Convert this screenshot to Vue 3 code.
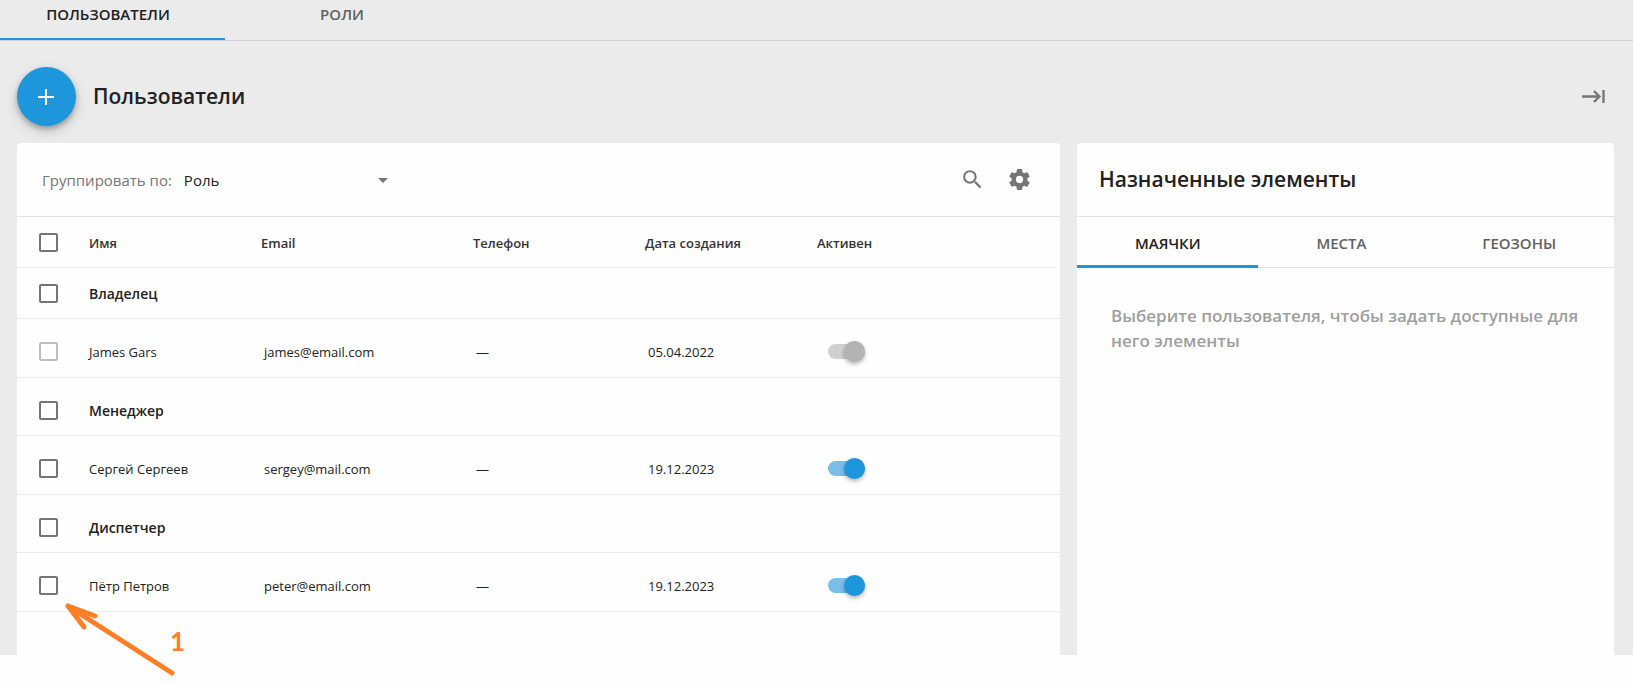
<script setup>
import { ref } from 'vue'

const section = ref('users')
const sections = [
  { id: 'users', label: 'ПОЛЬЗОВАТЕЛИ' },
  { id: 'roles', label: 'РОЛИ' },
]

const panel = ref('beacons')
const panels = [
  { id: 'beacons', label: 'МАЯЧКИ' },
  { id: 'places', label: 'МЕСТА' },
  { id: 'zones', label: 'ГЕОЗОНЫ' },
]

const groupBy = ref('role')

const groups = ref([
  {
    title: 'Владелец',
    users: [{ name: 'James Gars', email: 'james@email.com', date: '05.04.2022', active: true, locked: true }],
  },
  {
    title: 'Менеджер',
    users: [{ name: 'Сергей Сергеев', email: 'sergey@mail.com', date: '19.12.2023', active: true, locked: false }],
  },
  {
    title: 'Диспетчер',
    users: [{ name: 'Пётр Петров', email: 'peter@email.com', date: '19.12.2023', active: true, locked: false }],
  },
])
</script>

<template>
  <div class="page">
    <div class="screen">
      <nav class="sections" role="tablist">
        <button
          v-for="s in sections"
          :key="s.id"
          type="button"
          role="tab"
          class="section-tab"
          :class="{ current: section === s.id }"
          :aria-selected="section === s.id"
          @click="section = s.id"
        >{{ s.label }}</button>
      </nav>

      <header class="heading">
        <button type="button" class="fab" aria-label="Добавить пользователя">
          <svg width="25" height="25" viewBox="0 0 25 25" aria-hidden="true">
            <path d="M12 5v16M4 13h16" stroke="#fff" stroke-width="2" fill="none" />
          </svg>
        </button>
        <h1 class="title">Пользователи</h1>
        <button type="button" class="icon-button collapse" aria-label="Свернуть панель">
          <svg width="24" height="24" viewBox="0 0 24 24" aria-hidden="true">
            <path d="M0 12.5H17M12 7L17.5 12.5L12 18M21.5 6V19" stroke="#757575" stroke-width="2.3" fill="none" />
          </svg>
        </button>
      </header>

      <main class="cards">
        <section class="card">
          <div class="toolbar">
            <label class="group-label" for="group-by">Группировать по:</label>
            <span class="select-box">
              <select id="group-by" v-model="groupBy" class="group-select">
                <option value="role">Роль</option>
              </select>
              <svg class="caret" width="10" height="7" viewBox="0 0 10 7" aria-hidden="true">
                <path d="M0 2h10L5 7z" fill="#757575" />
              </svg>
            </span>
            <div class="tools">
              <button type="button" class="icon-button" aria-label="Поиск">
                <svg width="25" height="25" viewBox="0 0 24 24" aria-hidden="true">
                  <path fill="#757575" d="M15.5 14h-.79l-.28-.27A6.471 6.471 0 0 0 16 9.5 6.5 6.5 0 1 0 9.5 16c1.61 0 3.09-.59 4.23-1.57l.27.28v.79l5 4.99L20.49 19l-4.99-5zm-6 0C7.01 14 5 11.99 5 9.5S7.01 5 9.5 5 14 7.01 14 9.5 11.99 14 9.5 14z" />
                </svg>
              </button>
              <button type="button" class="icon-button" aria-label="Настройки">
                <svg width="25" height="25" viewBox="0 0 24 24" aria-hidden="true">
                  <path fill="#757575" d="M12 15.5A3.5 3.5 0 0 1 8.5 12 3.5 3.5 0 0 1 12 8.5a3.5 3.5 0 0 1 3.5 3.5 3.5 3.5 0 0 1-3.5 3.5m7.43-2.53c.04-.32.07-.64.07-.97s-.03-.66-.07-1l2.11-1.63c.19-.15.24-.42.12-.64l-2-3.46c-.12-.22-.39-.31-.61-.22l-2.49 1c-.52-.39-1.06-.73-1.69-.98l-.37-2.65A.506.506 0 0 0 14 2h-4c-.25 0-.46.18-.5.42l-.37 2.65c-.63.25-1.17.59-1.69.98l-2.49-1c-.22-.09-.49 0-.61.22l-2 3.46c-.13.22-.07.49.12.64L4.57 11c-.04.34-.07.67-.07 1s.03.65.07.97l-2.11 1.66c-.19.15-.25.42-.12.64l2 3.46c.12.22.39.3.61.22l2.49-1.01c.52.4 1.06.74 1.69.99l.37 2.65c.04.24.25.42.5.42h4c.25 0 .46-.18.5-.42l.37-2.65c.63-.26 1.17-.59 1.69-.99l2.49 1.01c.22.08.49 0 .61-.22l2-3.46c.12-.22.07-.49-.12-.64z" />
                </svg>
              </button>
            </div>
          </div>

          <table class="users">
            <colgroup>
              <col class="col-check" />
              <col class="col-name" />
              <col class="col-phone" />
              <col class="col-name" />
              <col class="col-name" />
              <col />
              <col class="col-edge" />
            </colgroup>
            <thead>
              <tr>
                <th class="check-cell"><input type="checkbox" class="check" aria-label="Выбрать всех" /></th>
                <th>Имя</th>
                <th>Email</th>
                <th>Телефон</th>
                <th>Дата создания</th>
                <th>Активен</th>
                <th class="edge"></th>
              </tr>
            </thead>
            <tbody v-for="g in groups" :key="g.title">
              <tr class="group-row">
                <td class="check-cell"><input type="checkbox" class="check" :aria-label="g.title" /></td>
                <td colspan="6" class="group-title">{{ g.title }}</td>
              </tr>
              <tr v-for="u in g.users" :key="u.email" class="user-row">
                <td class="check-cell">
                  <input type="checkbox" class="check" :disabled="u.locked" :aria-label="u.name" />
                </td>
                <td class="text">{{ u.name }}</td>
                <td class="text value">{{ u.email }}</td>
                <td class="text value">—</td>
                <td class="text value">{{ u.date }}</td>
                <td colspan="2" class="switch-cell">
                  <input
                    v-model="u.active"
                    type="checkbox"
                    role="switch"
                    class="switch"
                    :disabled="u.locked"
                    :aria-label="'Активен: ' + u.name"
                  />
                </td>
              </tr>
            </tbody>
          </table>
        </section>

        <section class="card">
          <h2 class="panel-title">Назначенные элементы</h2>
          <div class="panel-tabs" role="tablist">
            <button
              v-for="p in panels"
              :key="p.id"
              type="button"
              role="tab"
              class="panel-tab"
              :class="{ current: panel === p.id }"
              :aria-selected="panel === p.id"
              @click="panel = p.id"
            >{{ p.label }}</button>
          </div>
          <p class="hint">Выберите пользователя, чтобы задать доступные для него элементы</p>
        </section>
      </main>
    </div>

    <div class="callout">
      <svg width="120" height="80" viewBox="0 0 120 80" aria-hidden="true">
        <path
          d="M112 73L8 6M35 16L8 6L24 27"
          fill="none"
          stroke="#ff7f27"
          stroke-width="5"
          stroke-linecap="round"
          stroke-linejoin="round"
        />
      </svg>
      <span class="callout-number">1</span>
    </div>
  </div>
</template>

<style>
body {
  margin: 0;
  background: #fefefe;
}
</style>

<style scoped>
.page {
  position: relative;
  padding-bottom: 29px;
  background: #fefefe;
  color: #212121;
  font-family: "Open Sans", "Noto Sans", sans-serif;
}

.screen {
  display: flex;
  flex-direction: column;
  min-height: 655px;
  background: #ebebeb;
}

button,
select {
  margin: 0;
  padding: 0;
  border: 0;
  background: none;
  font-family: inherit;
  cursor: pointer;
}

.sections {
  display: flex;
  height: 40px;
  overflow: hidden;
  border-bottom: 1px solid #d0d0d0;
}

.section-tab {
  width: 234px;
  padding-bottom: 10px;
  border-bottom: 2px solid transparent;
  color: #616161;
  font-size: 15px;
  font-weight: 600;
}

.section-tab:first-child {
  margin-left: -9px;
}

.section-tab.current {
  border-bottom-color: #1e96dc;
  color: #212121;
}

.heading {
  display: flex;
  align-items: center;
  height: 102px;
  padding: 0 27px 0 17px;
}

.fab {
  display: flex;
  align-items: center;
  justify-content: center;
  width: 59px;
  height: 59px;
  margin-top: 8px;
  border-radius: 50%;
  background: #1e96dc;
  box-shadow: 0 3px 5px rgba(0, 0, 0, 0.25), 0 5px 14px rgba(0, 0, 0, 0.16);
}

.title {
  margin: 8px 0 0 17px;
  font-size: 21px;
  font-weight: 600;
  line-height: 30px;
}

.icon-button {
  display: flex;
}

.collapse {
  margin: 8px 0 0 auto;
}

.cards {
  display: grid;
  flex: 1;
  grid-template-columns: 1043fr 537fr;
  gap: 17px;
  padding: 0 19px 0 17px;
}

.card {
  min-width: 0;
  border-radius: 4px 4px 0 0;
  background: #fefefe;
}

.toolbar {
  display: flex;
  align-items: center;
  height: 73px;
  padding: 0 28px 0 25px;
  border-bottom: 1px solid #e0e0e0;
  font-size: 15px;
}

.group-label {
  color: #757575;
}

.select-box {
  display: flex;
  align-items: center;
  width: 204px;
  margin-left: 12px;
}

.group-select {
  flex: 1;
  height: 30px;
  margin-right: -10px;
  appearance: none;
  color: #212121;
  font-size: 15px;
}

.caret {
  pointer-events: none;
}

.tools {
  display: flex;
  gap: 22px;
  margin-left: auto;
}

.users {
  width: 100%;
  table-layout: fixed;
  border-collapse: separate;
  border-spacing: 0;
  font-size: 13px;
}

.col-check {
  width: 72px;
}

.col-name {
  width: 172px;
}

.col-phone {
  width: 212px;
}

.col-edge {
  width: 5px;
}

th,
td {
  height: 50px;
  padding: 0;
  border-bottom: 1px solid #ececec;
  text-align: left;
  white-space: nowrap;
}

th {
  color: #333;
  font-weight: 600;
}

th:not(.check-cell) {
  height: 48px;
  padding-top: 2px;
}

th.edge {
  border-bottom: 0;
}

.user-row td {
  height: 52px;
  padding-top: 6px;
}

.user-row td.text {
  height: 50px;
  padding-top: 8px;
}

tbody ~ tbody .group-row td {
  height: 49px;
  padding-top: 8px;
}

.group-title {
  font-size: 14px;
  font-weight: 600;
}

td.value {
  padding-left: 3px;
}

.check-cell {
  padding-left: 22px;
}

.check {
  display: block;
  width: 19px;
  height: 19px;
  margin: 0;
  appearance: none;
  border: 2px solid #757575;
  border-radius: 2px;
}

.check:checked {
  background: #1e96dc;
  border-color: #1e96dc;
}

.check:disabled {
  border-color: #bdbdbd;
}

.switch-cell {
  padding-left: 11px;
}

.switch {
  display: flex;
  align-items: center;
  width: 37px;
  height: 15px;
  margin: 0;
  appearance: none;
  border-radius: 8px;
  background: #d0d0d0;
}

.switch::before {
  content: "";
  width: 21px;
  height: 21px;
  flex: none;
  border-radius: 50%;
  background: #b3b3b3;
  box-shadow: 0 2px 4px rgba(0, 0, 0, 0.3);
}

.switch:checked {
  justify-content: flex-end;
}

.switch:checked:enabled {
  background: #79bfe9;
}

.switch:checked:enabled::before {
  background: #1e96dc;
}

.panel-title {
  height: 73px;
  margin: 0;
  padding-left: 22px;
  border-bottom: 1px solid #e0e0e0;
  font-size: 21px;
  font-weight: 600;
  line-height: 73px;
}

.panel-tabs {
  display: flex;
  height: 50px;
  border-bottom: 1px solid #e0e0e0;
}

.panel-tab {
  flex: 1 1 auto;
  height: 51px;
  padding-top: 3px;
  border-bottom: 3px solid transparent;
  color: #616161;
  font-size: 15px;
  font-weight: 600;
}

.panel-tab.current {
  border-bottom-color: #1e96dc;
  color: #212121;
}

.hint {
  margin: 35px 34px 0;
  color: #9e9e9e;
  font-size: 17px;
  font-weight: 600;
  line-height: 25px;
}

.callout {
  position: absolute;
  top: 600px;
  left: 60px;
  color: #ff7f27;
}

.callout-number {
  position: absolute;
  top: 23px;
  left: 110px;
  font-family: Lato, "Open Sans", sans-serif;
  font-size: 26px;
  font-weight: 700;
  line-height: 36px;
}
</style>
